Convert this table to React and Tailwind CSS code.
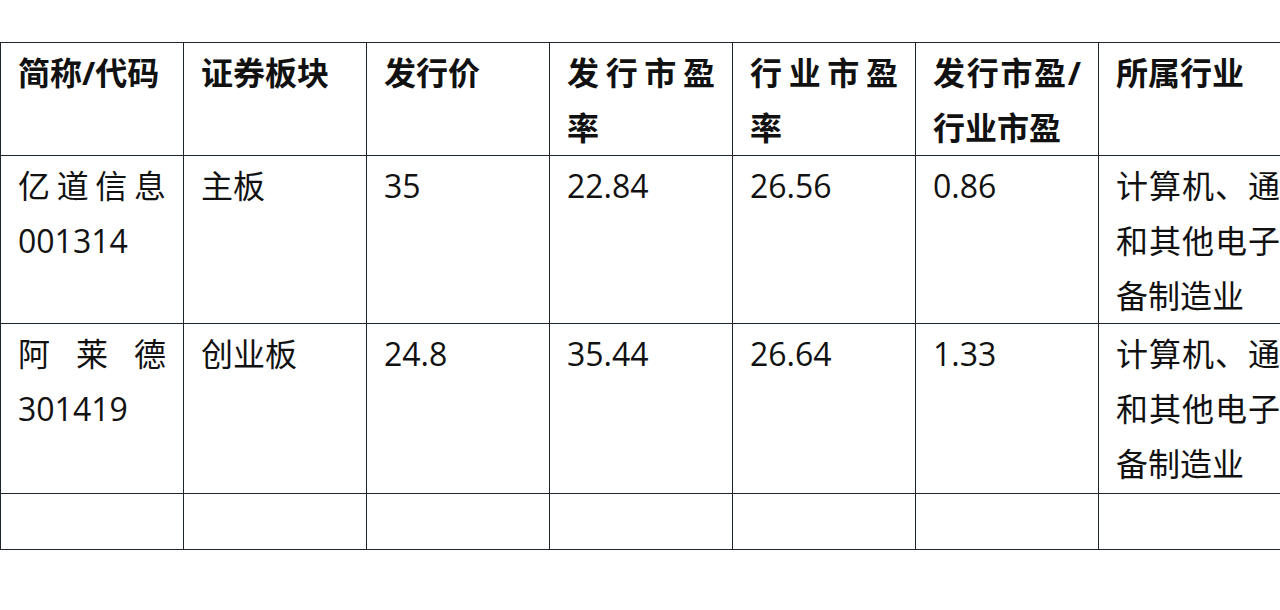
import React from 'react'

const headers = ['简称/代码', '证券板块', '发行价', '发行市盈率', '行业市盈率', '发行市盈/行业市盈', '所属行业']

const rows = [
    ['亿道信息001314', '主板', '35', '22.84', '26.56', '0.86', '计算机、通信和其他电子设备制造业'],
    ['阿莱德301419', '创业板', '24.8', '35.44', '26.64', '1.33', '计算机、通信和其他电子设备制造业'],
    ['', '', '', '', '', '', ''],
]

function App() {
    return (
        <div className='w-[1280px] h-[610px] overflow-hidden bg-white pt-[42px]' style={{ fontFamily: '"Open Sans", "Noto Sans CJK SC", sans-serif' }}>
            <table className='table-fixed border-collapse w-[1330px] text-[32px] leading-[55px] text-[#111]'>
                <colgroup>
                    <col className='w-[183px]' />
                    <col className='w-[183px]' />
                    <col className='w-[183px]' />
                    <col className='w-[183px]' />
                    <col className='w-[183px]' />
                    <col className='w-[183px]' />
                    <col className='w-[232px]' />
                </colgroup>
                <thead>
                    <tr className='h-[113px]'>
                        {headers.map((h) => (
                            <th key={h} className='border border-[#1c262c] px-[17px] pt-[2px] pb-0 align-top text-justify font-bold'>
                                {h}
                            </th>
                        ))}
                    </tr>
                </thead>
                <tbody>
                    {rows.map((row, i) => (
                        <tr key={i} className={i === 2 ? 'h-[56px]' : i === 1 ? 'h-[170px]' : 'h-[167px]'}>
                            {row.map((cell, j) => (
                                <td key={j} className='border border-[#1c262c] px-[17px] pt-[2px] pb-0 align-top text-justify'>
                                    {cell}
                                </td>
                            ))}
                        </tr>
                    ))}
                </tbody>
            </table>
        </div>
    )
}

export default App
